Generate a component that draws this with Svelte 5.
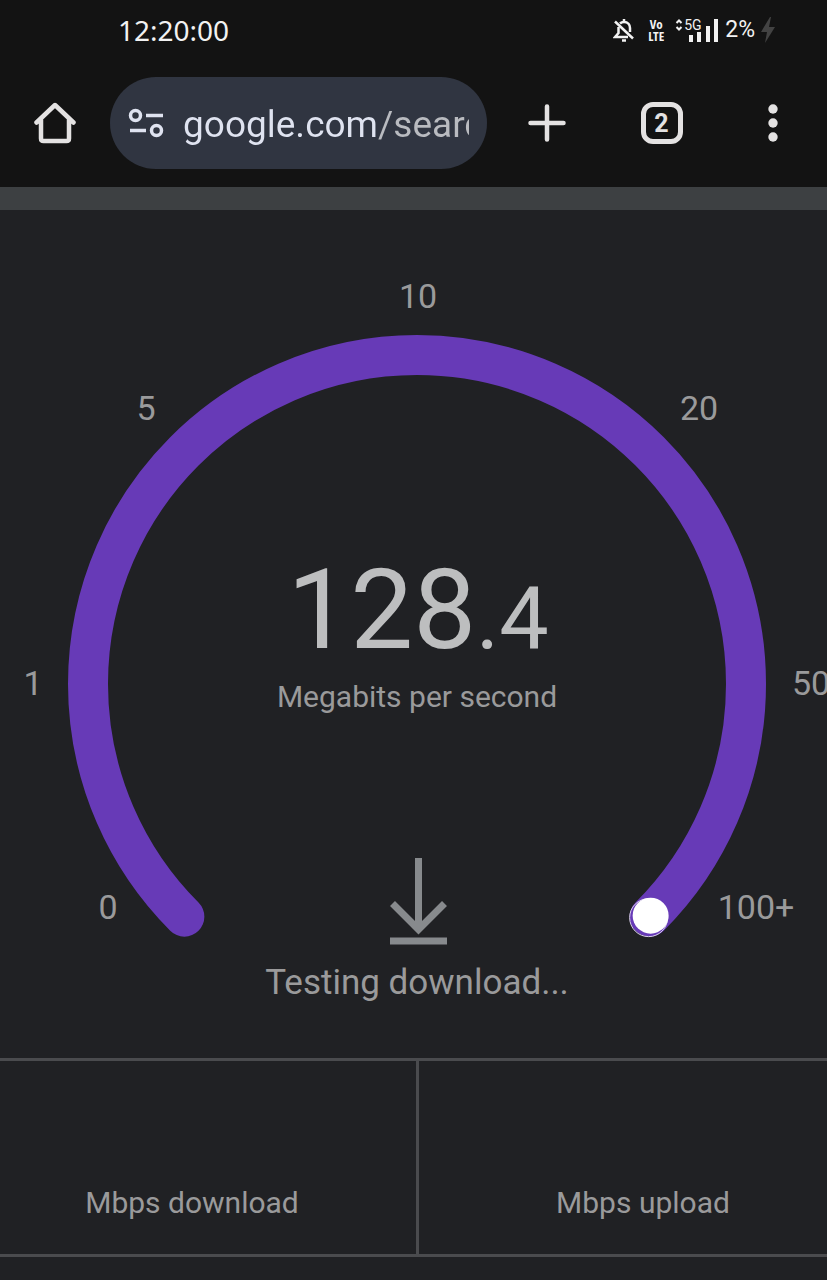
<script lang="ts">
	const clock = '12:20:00';
	const battery = 2;
	const tabCount = 2;
	const speed = { whole: '128', fraction: '.4' };

	let address = $state('google.com/search');

	// Dial geometry, in viewBox units
	const cx = 417;
	const cy = 474;
	const radius = 329;

	// x / y is the middle of the label and its baseline
	const ticks = [
		{ label: '0', x: 108, y: 709 },
		{ label: '1', x: 33, y: 485 },
		{ label: '5', x: 146, y: 210 },
		{ label: '10', x: 418, y: 98 },
		{ label: '20', x: 699, y: 210 },
		{ label: '50', x: 811, y: 485 },
		{ label: '100+', x: 756, y: 709 },
	];

	const results = ['Mbps download', 'Mbps upload'];

	function point(degrees: number) {
		const rad = (degrees * Math.PI) / 180;
		return { x: cx + radius * Math.cos(rad), y: cy + radius * Math.sin(rad) };
	}

	const start = point(135);
	const end = point(45);
	const arc = `M${start.x} ${start.y}A${radius} ${radius} 0 1 1 ${end.x} ${end.y}`;
</script>

<div class="screen">
	<div class="status-bar">
		<time>{clock}</time>
		<div class="status-icons">
			<!-- Muted bell -->
			<svg class="bell" viewBox="0 0 22 24" width="22" height="24" fill="none" stroke="currentColor" stroke-width="2.500" aria-hidden="true">
				<path d="M7 5.500C8 4.500 9.500 4 11 4c4 0 6 3 6 6v4M5.500 9v6L2 19h13M11 1v3" />
				<path d="M2 3.500l18 17" />
				<path d="M9 22.500h4" />
			</svg>
			<span class="volte"><span>Vo</span><span>LTE</span></span>
			<span class="signal">
				<svg viewBox="0 0 44 24" width="44" height="24" aria-hidden="true">
					<path d="M1.500 5L4 2.500 6.500 5M1.500 9L4 11.500 6.500 9" fill="none" stroke="currentColor" stroke-width="2" />
					<path d="M14 17h4v7h-4zM22 14h4v10h-4zM31 8h4v16h-4zM39 1h4v23h-4z" fill="currentColor" />
				</svg>
				<span class="network">5G</span>
			</span>
			<span class="battery">{battery}%</span>
			<svg class="bolt" viewBox="0 0 14 26" width="14" height="26" aria-hidden="true">
				<path d="M9 0L0 15h6L4 26l10-16H8L10 0z" fill="currentColor" />
			</svg>
		</div>
	</div>

	<div class="toolbar">
		<button class="home" type="button" aria-label="Home">
			<svg viewBox="0 0 42 42" width="42" height="42" fill="none" stroke="currentColor" stroke-width="4.500" stroke-linecap="round" stroke-linejoin="round" aria-hidden="true">
				<path d="M2.500 20.500L21 3l18.500 17.500M7 18v18.500q0 2.500 2.500 2.500h23q2.500 0 2.500-2.500V18" />
			</svg>
		</button>
		<div class="omnibox">
			<button class="site-info" type="button" aria-label="Site information">
				<svg viewBox="0 0 36 30" width="36" height="30" fill="none" stroke="currentColor" stroke-width="3.500" aria-hidden="true">
					<circle cx="7.500" cy="7.500" r="5" />
					<circle cx="28.500" cy="22.500" r="5" />
					<path d="M18 7.500h17M2 22.500h16" />
				</svg>
			</button>
			<input type="text" aria-label="Address" spellcheck="false" bind:value={address} />
		</div>
		<button class="action" type="button" aria-label="New tab">
			<svg viewBox="0 0 38 38" width="38" height="38" fill="none" stroke="currentColor" stroke-width="4.500" stroke-linecap="round" aria-hidden="true">
				<path d="M19 2.500v33M2.500 19h33" />
			</svg>
		</button>
		<button class="action" type="button" aria-label="Switch tabs">
			<span class="tab-count">{tabCount}</span>
		</button>
		<button class="more" type="button" aria-label="More options">
			<svg viewBox="0 0 10 38" width="10" height="38" fill="currentColor" aria-hidden="true">
				<circle cx="5" cy="5" r="4.700" />
				<circle cx="5" cy="19" r="4.700" />
				<circle cx="5" cy="33" r="4.700" />
			</svg>
		</button>
	</div>

	<main>
		<svg class="dial" viewBox="0 0 835 848" role="img" aria-label="Internet speed test">
			<path class="track" d={arc} />
			<circle class="knob-ring" cx={end.x - 1} cy={end.y + 1} r="19" />
			<circle class="knob" cx={end.x + 1} cy={end.y - 1} r="18" />

			{#each ticks as tick}
				<text class="label" x={tick.x} y={tick.y}>{tick.label}</text>
			{/each}

			<text class="speed" x="418" y="438">{speed.whole}<tspan class="fraction">{speed.fraction}</tspan></text>
			<text class="unit" x="417" y="497">Megabits per second</text>

			<path class="arrow" d="M418.500 648v71M392.500 693.500l26 26 26-26M390 731h57" />
			<text class="phase" x="417" y="784">Testing download...</text>
		</svg>

		<div class="results">
			{#each results as result}
				<div class="result">{result}</div>
			{/each}
		</div>
	</main>
</div>

<style>
	:global(body) {
		margin: 0;
		background: #202124;
	}

	.screen {
		min-height: 100vh;
		overflow: hidden;
		background: #202124;
		color: #9a9a9b;
		font-family: Roboto, 'Liberation Sans', sans-serif;
	}

	/* ===== Status bar ===== */
	.status-bar {
		display: flex;
		align-items: center;
		justify-content: space-between;
		height: 59px;
		padding: 0 52px 0 118px;
		background: #131313;
		color: #f2f2f2;
		font-family: 'Noto Sans', 'Open Sans', sans-serif;
		font-size: 28px;
	}

	.status-icons {
		display: flex;
		align-items: center;
	}

	.bell {
		margin-right: 12px;
	}

	.volte {
		display: flex;
		flex-direction: column;
		align-items: center;
		width: 18px;
		margin-right: 10px;
		font-family: 'Open Sans Condensed', 'DejaVu Sans Condensed', Roboto, sans-serif;
		font-size: 13px;
		font-weight: 700;
		line-height: 12px;
	}

	.signal {
		position: relative;
		display: flex;
		margin-right: 6px;
	}

	.network {
		position: absolute;
		top: 0;
		left: 9px;
		font-family: Roboto, sans-serif;
		font-size: 14px;
		line-height: 14px;
	}

	.battery {
		margin-right: 6px;
		font-family: Roboto, sans-serif;
		font-size: 23px;
	}

	.bolt {
		color: #434343;
	}

	/* ===== Toolbar ===== */
	.toolbar {
		display: flex;
		align-items: center;
		height: 128px;
		background: #131313;
		border-bottom: 23px solid #3d4042;
		color: #e4e2e2;
	}

	button {
		display: flex;
		align-items: center;
		justify-content: center;
		flex-shrink: 0;
		height: 92px;
		padding: 0;
		border: 0;
		background: none;
		color: inherit;
		font: inherit;
		cursor: pointer;
	}

	.home {
		width: 110px;
	}

	.action {
		width: 115px;
	}

	.more {
		width: 108px;
	}

	.omnibox {
		display: flex;
		flex: 1;
		align-items: center;
		min-width: 0;
		height: 92px;
		margin-right: 2px;
		padding: 0 18px;
		box-sizing: border-box;
		border-radius: 46px;
		background: #303541;
		color: #dfe3f0;
	}

	.site-info {
		width: 36px;
		margin-right: 19px;
	}

	/* The host is brighter than the path */
	input {
		flex: 1;
		min-width: 0;
		height: 60px;
		padding: 2px 0 0;
		border: 0;
		outline: 0;
		background: linear-gradient(to right, #dfe3f0 194px, #b9bbc0 194px);
		background-clip: text;
		-webkit-background-clip: text;
		color: transparent;
		caret-color: #dfe3f0;
		font-family: inherit;
		font-size: 37px;
	}

	.tab-count {
		display: flex;
		align-items: center;
		justify-content: center;
		width: 42px;
		height: 42px;
		box-sizing: border-box;
		border: 5px solid currentColor;
		border-radius: 12px;
		font-size: 25px;
		font-weight: 700;
	}

	/* ===== Speed dial ===== */
	main {
		/* The card is slightly wider than the window */
		width: calc(100% + 8px);
	}

	.dial {
		display: block;
		width: 100%;
		fill: currentColor;
		text-anchor: middle;
	}

	.track {
		fill: none;
		stroke: #673ab7;
		stroke-width: 40px;
		stroke-linecap: round;
	}

	.knob {
		fill: #fff;
	}

	.knob-ring {
		fill: none;
		stroke: #d9d0ea;
		stroke-width: 1px;
	}

	.label {
		font-size: 34px;
	}

	.speed {
		fill: #bdbebf;
		font-size: 112px;
	}

	.fraction {
		font-size: 88px;
	}

	.unit {
		font-size: 30px;
	}

	.phase {
		font-size: 35px;
	}

	.arrow {
		fill: none;
		stroke: #878a8d;
		stroke-width: 7px;
	}

	/* ===== Results ===== */
	.results {
		display: flex;
		border-top: 3px solid #4a4b4e;
		border-bottom: 3px solid #4a4b4e;
	}

	.result {
		flex: 1;
		padding: 122px 0 32px;
		font-size: 30px;
		line-height: 39px;
		text-align: center;
	}

	.result:first-child {
		padding-right: 32px;
		border-right: 3px solid #4a4b4e;
	}

	.result:last-child {
		padding-left: 32px;
	}
</style>
